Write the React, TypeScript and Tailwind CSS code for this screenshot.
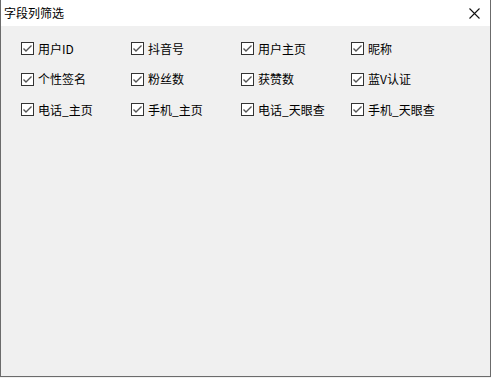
const fields = [
  "用户ID", "抖音号", "用户主页", "昵称",
  "个性签名", "粉丝数", "获赞数", "蓝V认证",
  "电话_主页", "手机_主页", "电话_天眼查", "手机_天眼查",
];

function CheckItem({ label }: { label: string }) {
  return (
    <label className="flex items-center h-[13px] gap-[4px] cursor-default select-none">
      <span className="w-[13px] h-[13px] border border-[#333333] bg-white flex items-center justify-center shrink-0">
        <svg width="11" height="11" viewBox="0 0 11 11">
          <path d="M1.5 5.5 L4 8 L9.5 2.5" fill="none" stroke="#555555" strokeWidth="1.4" />
        </svg>
      </span>
      <span className="text-[12px] leading-none text-black">{label}</span>
    </label>
  );
}

export default function App() {
  return (
    <div
      className="w-[491px] h-[378px] bg-[#f0f0f0] flex flex-col"
      style={{ fontFamily: '"Noto Sans CJK SC", "Liberation Sans", sans-serif' }}
    >
      <div className="h-[377px] flex flex-col border-l border-r border-b border-[#6b6b6b]">
        {/* title bar */}
        <div className="h-[26px] bg-white flex items-center justify-between pl-[3px] pr-[10px]">
          <span className="text-[12px] text-black">字段列筛选</span>
          <svg width="11" height="11" viewBox="0 0 11 11">
            <path d="M0.5 0.5 L10.5 10.5 M10.5 0.5 L0.5 10.5" stroke="#111" strokeWidth="1.1" />
          </svg>
        </div>
        {/* content */}
        <div className="flex-1 bg-[#f0f0f0] pt-[16px] pl-[20px]">
          <div className="grid grid-cols-[110px_110px_110px_110px] auto-rows-[30.5px]">
            {fields.map((f) => (
              <CheckItem key={f} label={f} />
            ))}
          </div>
        </div>
      </div>
    </div>
  );
}
